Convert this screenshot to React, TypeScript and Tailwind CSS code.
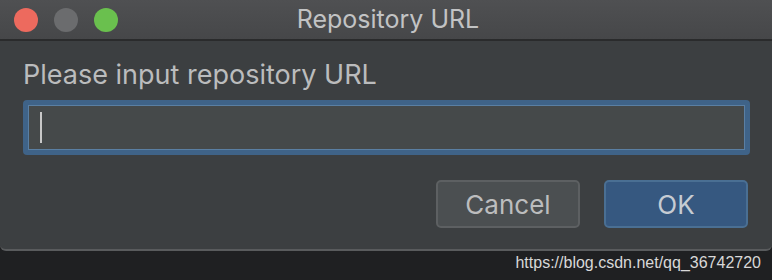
export default function App() {
  return (
    <div className="w-[772px] h-[280px] bg-[#1f2022] overflow-hidden" style={{ fontFamily: "Inter, 'Liberation Sans', sans-serif" }}>
      <div className="h-[251px] bg-[#3c3f41] rounded-b-[6px] border-b-2 border-[#595b5d] flex flex-col">
        {/* Title bar */}
        <div className="relative h-[41px] bg-gradient-to-b from-[#4f5052] to-[#464749] border-b-2 border-[#2a2b2c] flex items-center">
          <div className="flex items-center gap-[16px] pl-[14px]">
            <span className="w-[24px] h-[24px] rounded-full bg-[#ed6a5e]" />
            <span className="w-[24px] h-[24px] rounded-full bg-[#6b6c6e]" />
            <span className="w-[24px] h-[24px] rounded-full bg-[#6ac04e]" />
          </div>
          <div className="absolute inset-0 flex items-center justify-center pl-[4px] pt-[1px] text-[25px] text-[#c2c3c4]">
            Repository URL
          </div>
        </div>

        {/* Body */}
        <div className="flex flex-col px-[23px] pt-[19px]">
          <div className="text-[27px] leading-[30px] text-[#bbbcbd]">Please input repository URL</div>
          <div className="mt-[10px] w-[727px] h-[55px] rounded-[4px] bg-[#3f6388] p-[5px]">
            <div className="w-full h-full bg-[#45494a] border border-[#5a7fa3] flex items-center pl-[11px]">
              <span className="w-[2px] h-[31px] bg-[#c8c8c8]" />
            </div>
          </div>
          <div className="flex justify-end gap-[24px] mt-[25px] pr-[1px]">
            <button className="w-[144px] h-[48px] rounded-[5px] bg-[#4b4f51] border-2 border-[#5d6062] text-[26px] text-[#bcbdbe]">
              Cancel
            </button>
            <button className="w-[144px] h-[48px] rounded-[5px] bg-[#365880] border-2 border-[#4a6f93] text-[26px] text-[#c6ccd3]">
              OK
            </button>
          </div>
        </div>
      </div>
      <div className="flex justify-end pr-[11px] pt-[1px] text-[16px] leading-[22px] text-[#d8d8d8]" style={{ fontFamily: "'Liberation Sans', Arial, sans-serif" }}>
        https://blog.csdn.net/qq_36742720
      </div>
    </div>
  );
}
